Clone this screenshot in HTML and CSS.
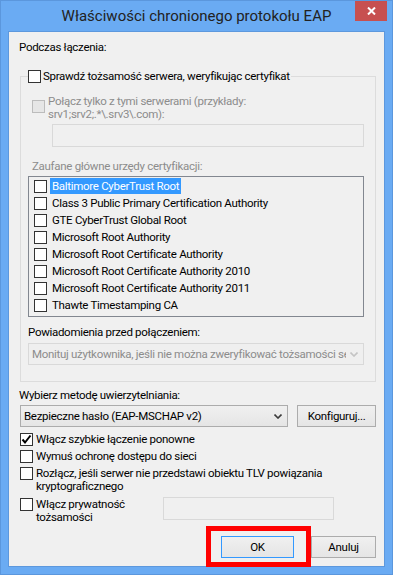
FILE: index.html
```html
<!DOCTYPE html>
<html lang="pl">
<head>
<meta charset="UTF-8">
<meta name="viewport" content="width=device-width, initial-scale=1.0">
<title>Właściwości chronionego protokołu EAP</title>
<link rel="stylesheet" href="styles.css">
</head>
<body>

<div class="window">
    <div class="titlebar">
        <span></span>
        <div class="title">Właściwości chronionego protokołu EAP</div>
        <div class="close-btn">
            <svg width="9" height="8" viewBox="0 0 9 8"><path d="M1 0.5 L8 7.5 M8 0.5 L1 7.5" stroke="#fff" stroke-width="2"/></svg>
        </div>
    </div>

    <div class="client">
        <div class="label first-label">Podczas łączenia:</div>

        <fieldset class="group">
            <legend><span class="check"></span><span class="legend-text">Sprawdź tożsamość serwera, weryfikując certyfikat</span></legend>

            <div class="check-row servers-row">
                <span class="check check-disabled"></span>
                <span class="dim">Połącz tylko z tymi serwerami (przykłady:<br>srv1;srv2;.*\.srv3\.com):</span>
            </div>
            <div class="textbox servers-box"></div>

            <div class="label dim cert-label">Zaufane główne urzędy certyfikacji:</div>
            <ul class="cert-list">
                <li><span class="check"></span><span class="cert-name selected">Baltimore CyberTrust Root</span></li>
                <li><span class="check"></span><span class="cert-name">Class 3 Public Primary Certification Authority</span></li>
                <li><span class="check"></span><span class="cert-name">GTE CyberTrust Global Root</span></li>
                <li><span class="check"></span><span class="cert-name">Microsoft Root Authority</span></li>
                <li><span class="check"></span><span class="cert-name">Microsoft Root Certificate Authority</span></li>
                <li><span class="check"></span><span class="cert-name">Microsoft Root Certificate Authority 2010</span></li>
                <li><span class="check"></span><span class="cert-name">Microsoft Root Certificate Authority 2011</span></li>
                <li><span class="check"></span><span class="cert-name">Thawte Timestamping CA</span></li>
            </ul>

            <div class="label notify-label">Powiadomienia przed połączeniem:</div>
            <div class="combo combo-disabled">
                <span class="combo-text">Monituj użytkownika, jeśli nie można zweryfikować tożsamości serwera</span>
                <svg width="8" height="5" viewBox="0 0 8 5"><path d="M0.5 0.5 L4 4 L7.5 0.5" fill="none" stroke="#c4c4c4" stroke-width="1.6"/></svg>
            </div>
        </fieldset>

        <div class="label method-label">Wybierz metodę uwierzytelniania:</div>
        <div class="method-row">
            <div class="combo method-combo">
                <span class="combo-text">Bezpieczne hasło (EAP-MSCHAP v2)</span>
                <svg width="8" height="5" viewBox="0 0 8 5"><path d="M0.5 0.5 L4 4 L7.5 0.5" fill="none" stroke="#3c3c3c" stroke-width="1.6"/></svg>
            </div>
            <button class="btn configure-btn">Konfiguruj...</button>
        </div>

        <div class="check-row option-row first-option">
            <span class="check">
                <svg width="11" height="11" viewBox="0 0 11 11"><path d="M1.5 5.5 L4 8.5 L9.5 1.5" fill="none" stroke="#000" stroke-width="2"/></svg>
            </span>
            <span>Włącz szybkie łączenie ponowne</span>
        </div>
        <div class="check-row option-row">
            <span class="check"></span>
            <span>Wymuś ochronę dostępu do sieci</span>
        </div>
        <div class="check-row option-row">
            <span class="check"></span>
            <span>Rozłącz, jeśli serwer nie przedstawi obiektu TLV powiązania<br>kryptograficznego</span>
        </div>
        <div class="check-row option-row privacy-row">
            <span class="check"></span>
            <span class="privacy-label">Włącz prywatność tożsamości</span>
            <div class="textbox privacy-box"></div>
        </div>

        <div class="button-row">
            <div class="ok-wrap">
                <button class="btn default-btn">OK</button>
                <div class="highlight-frame"></div>
            </div>
            <button class="btn cancel-btn">Anuluj</button>
        </div>
    </div>
</div>

</body>
</html>
```

FILE: styles.css
```css
body {
    margin: 0;
    font-family: Roboto, "Noto Sans", sans-serif;
    font-size: 11.5px;
    letter-spacing: -0.3px;
    color: #000;
    background-color: #6aabf3;
}

.window {
    width: 393px;
    height: 575px;
    box-sizing: border-box;
    border: 1px solid #5b97dd;
    background-color: #6aabf3;
    display: flex;
    flex-direction: column;
}

.titlebar {
    height: 30px;
    display: grid;
    grid-template-columns: 40px 1fr 40px;
}
.title {
    text-align: center;
    font-size: 15px;
    letter-spacing: 0;
    line-height: 30px;
    color: #222;
    white-space: nowrap;
}
.close-btn {
    justify-self: end;
    width: 32px;
    height: 20px;
    margin-right: 5px;
    background-color: #c75050;
    display: flex;
    align-items: center;
    justify-content: center;
}

.client {
    height: 536px;
    margin: 0 7px;
    box-sizing: border-box;
    border: 1px solid #5d98dd;
    background-color: #f0f0f0;
    padding: 8px 8px 0 11px;
}

.label {
    line-height: 14px;
    white-space: nowrap;
}
.first-label {
    line-height: 15px;
    margin-left: -1px;
}
.dim {
    color: #8c8c8c;
}

/* group box */
.group {
    margin: 14px 0 0 0;
    padding: 12px 11px 16px 7px;
    border: 1px solid #dcdcdc;
    min-width: 0;
}
.group legend {
    padding: 0;
    display: flex;
    align-items: center;
    line-height: 14px;
}
.legend-text {
    margin-left: 2px;
    padding-right: 1px;
}

.check {
    width: 13px;
    height: 13px;
    box-sizing: border-box;
    border: 1px solid #333;
    background-color: #fff;
    flex-shrink: 0;
    display: flex;
    align-items: center;
    justify-content: center;
}
.check-disabled {
    border-color: #bcbcbc;
    background-color: #e6e6e6;
}

.check-row {
    display: flex;
    align-items: flex-start;
    line-height: 13px;
}
.check-row .check + span {
    margin-left: 3px;
}
.servers-row {
    margin-left: 4px;
}
.servers-row .check {
    margin-top: 5px;
}

.textbox {
    height: 23px;
    box-sizing: border-box;
    border: 1px solid #d9d9d9;
    background-color: #f0f0f0;
}
.servers-box {
    margin: 3px 0 0 24px;
}

.cert-label {
    margin: 12px 0 0 4px;
}

.cert-list {
    list-style: none;
    margin: 3px 0 0 0;
    padding: 1px 0 2px 0;
    border: 1px solid #828790;
}
.cert-list li {
    height: 17px;
    display: flex;
    align-items: flex-start;
}
.cert-list .check {
    margin: 2px 0 0 5px;
}
.cert-name {
    margin-left: 3px;
    padding: 0 2px;
    line-height: 16px;
    white-space: nowrap;
}
.cert-name.selected {
    background-color: #3399ff;
    color: #fff;
}

.notify-label {
    margin-top: 8px;
}

.combo {
    height: 22px;
    box-sizing: border-box;
    border: 1px solid #acacac;
    background: linear-gradient(#f0f0f0, #e5e5e5);
    display: flex;
    align-items: center;
    padding: 0 5px 0 3px;
}
.combo-text {
    flex: 1;
    overflow: hidden;
    white-space: nowrap;
}
.combo svg {
    margin-left: 4px;
    flex-shrink: 0;
}
.combo-disabled {
    margin-top: 4px;
    border-color: #d9d9d9;
    background: #efefef;
    color: #8c8c8c;
}

.method-label {
    margin: 6px 0 0 -1px;
}
.method-row {
    margin-top: 3px;
    display: flex;
    gap: 9px;
}
.method-combo {
    width: 268px;
}

.btn {
    height: 22px;
    padding: 0;
    box-sizing: border-box;
    border: 1px solid #acacac;
    background: linear-gradient(#f0f0f0, #e5e5e5);
    font-family: inherit;
    font-size: inherit;
    letter-spacing: inherit;
    color: #000;
}
.configure-btn {
    width: 79px;
}

.option-row {
    margin-top: 4px;
}
.first-option {
    margin-top: 6px;
}
.privacy-row {
    margin-top: 5px;
}
.privacy-label {
    width: 100px;
}
.privacy-box {
    width: 171px;
    margin: -1px 0 0 27px;
}

.button-row {
    margin-top: 12px;
    display: flex;
    justify-content: flex-end;
    gap: 17px;
}
.ok-wrap {
    position: relative;
}
.default-btn {
    width: 73px;
    border-color: #3399ff;
}
.cancel-btn {
    width: 65px;
}
.highlight-frame {
    position: absolute;
    top: -10px;
    left: -15px;
    width: 105px;
    height: 41px;
    box-sizing: border-box;
    border: 5px solid #ff0000;
}
```
